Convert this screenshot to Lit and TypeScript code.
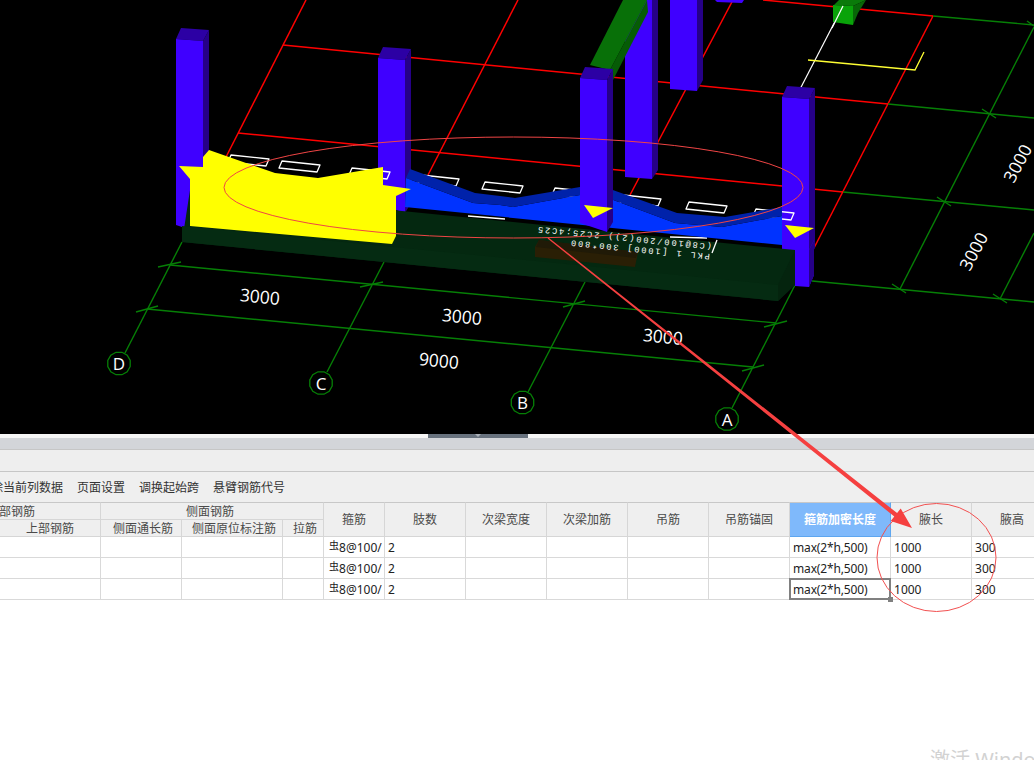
import { LitElement, html, css, svg } from "lit";
import { customElement } from "lit/decorators.js";

const RED = "#ff0000";
const GREEN = "#067f06";

const line = (p: number[], c: string, w = 1.5) =>
  svg`<line x1=${p[0]} y1=${p[1]} x2=${p[2]} y2=${p[3]} stroke=${c} stroke-width=${w} />`;
const poly = (pts: string, fill: string) => svg`<polygon points=${pts} fill=${fill} />`;

const redLines = [
  [763, 0, 933, 16], [283, 45, 888, 104], [238, 133, 843, 192],
  [306, 0, 226, 157], [518, 0, 428, 175], [733, 0, 630, 195], [933, 16, 814, 248],
];
const greenLines = [
  [933, 16, 1034, 25], [888, 104, 1034, 118], [843, 192, 1034, 210], [812, 281, 1034, 302],
  [1034, 27, 900, 289], [1034, 233, 1000, 299],
  [170, 265, 776, 323], [147, 309, 753, 367],
  [182, 242, 125, 353], [384, 262, 327, 372], [585, 282, 528, 392], [795, 285, 732, 408],
  [158, 267, 181, 262], [360, 287, 383, 282], [136, 312, 158, 306], [563, 307, 585, 301],
  [764, 327, 787, 321], [742, 371, 764, 365],
  [982, 109, 996, 118], [937, 197, 951, 206], [892, 284, 906, 293], [993, 294, 1007, 303], [1027, 21, 1034, 26],
];
const stirrups = [
  [228, 155], [279, 161], [349, 168], [418, 175], [482, 182], [552, 188], [620, 195], [686, 202], [753, 209],
];
const axes: [string, number, number][] = [
  ["D", 119, 363.5], ["C", 321, 383], ["B", 522.5, 402.5], ["A", 727, 419],
];
const dims: [string, number, number, number][] = [
  ["3000", 260, 296, 5.5], ["3000", 462, 316, 5.5], ["3000", 663, 336, 5.5], ["9000", 439, 360, 5.5],
  ["3000", 1017, 163, -62], ["3000", 973, 251, -62],
];

function ring(cx: number, cy: number) {
  const pts: string[] = [];
  for (let i = 0; i < 12; i++) {
    const a = (i * Math.PI) / 6 + 0.26;
    pts.push(`${(cx + 11.6 * Math.cos(a)).toFixed(1)},${(cy + 11.6 * Math.sin(a)).toFixed(1)}`);
  }
  return pts.join(" ");
}

function column(x: number, top: number, bottom: number) {
  return svg`
    ${poly(`${x + 27},${top + 2} ${x + 33},${top - 9} ${x + 33},${bottom - 1} ${x + 27},${bottom + 9}`, "#260088")}
    ${poly(`${x},${top} ${x + 5},${top - 11} ${x + 33},${top - 9} ${x + 27},${top + 2}`, "#2c00a4")}
    ${poly(`${x},${top} ${x + 27},${top + 2} ${x + 27},${bottom + 9} ${x},${bottom}`, "#3f00ff")}
  `;
}

@customElement("cad-scene")
class CadScene extends LitElement {
  static styles = css`
    :host { display: block; height: 434px; background: #000; overflow: hidden; }
    svg { display: block; }
    .dim { font: 17.5px "Open Sans", sans-serif; fill: #fff; text-anchor: middle; dominant-baseline: central; }
    .axis { font: 17px "Open Sans", sans-serif; fill: #fff; text-anchor: middle; dominant-baseline: central; }
    .mark { font: 8.6px "Liberation Mono", monospace; fill: #fff; letter-spacing: 1.9px; }
    .stir { fill: none; stroke: #fff; stroke-width: 1.3; stroke-linejoin: round; }
  `;
  render() {
    return html`<svg width="1034" height="434" viewBox="0 0 1034 434">
      ${redLines.map((l) => line(l, RED))}
      ${greenLines.map((l) => line(l, GREEN, 1.4))}
      ${line([843, 6, 798, 93], "#ffffff", 1.2)}
      <polyline points="808,60 915,70 924,52" fill="none" stroke="#ffff33" stroke-width="1.3" />

      <!-- back columns and green members -->
      ${poly("715,0 717,2 742,3 744,0", "#3f00ff")}
      ${poly("652,0 658,0 658,170 652,179", "#260088")}
      ${poly("625,0 652,0 652,179 625,177", "#3f00ff")}
      ${poly("623,0 590,65 610,70 647,0", "#087008")}
      ${poly("647,0 610,70 613,80 648,12", "#065c06")}
      ${poly("697,0 703,0 703,80 697,91", "#260088")}
      ${poly("670,0 697,0 697,91 670,89", "#3f00ff")}
      ${poly("834,5 839,0 866,0 853,6", "#0a7a0a")}
      ${poly("853,6 866,0 858,13 853,25", "#086608")}
      ${poly("833,5 853,6 853,25 833,22", "#09a309")}
      ${line([843, 6, 832, 28], "#ffffff", 1.2)}

      ${column(176, 39, 225)}
      ${column(378, 58, 204)}
      ${column(782, 97, 249)}

      ${stirrups.map(
        ([x, y]) => svg`<polygon class="stir" points="${x},${y + 7} ${x + 3},${y} ${x + 41},${y + 4} ${x + 38},${y + 11}" />`
      )}

      <!-- lower tie marks and the dark beam -->
      ${poly("190,190 795,250 795,285 778,301 182,242", "#042810")}
      ${poly("182,226 778,285 778,301 182,242", "#052b12")}
      ${poly("795,250 795,285 778,301 778,285", "#04240e")}
      ${poly("535,247 539,240 638,252 635,267 535,257", "#2a1f05")}
      ${poly("539,240 638,252 636,258 536,247", "#201a07")}
      ${line([468, 216, 505, 219], "#ffffff", 1.3)}
      ${line([670, 237, 707, 238], "#ffffff", 1.3)}
      ${line([717, 240, 712, 253], "#ffffff", 1.3)}
      <text class="mark" transform="translate(710 254) rotate(185.7)">PKL 1 [1000] 300*800</text>
      <text class="mark" transform="translate(712 244) rotate(185.7)">(C8@100/200(2)) 2C25;4C25</text>

      <!-- blue beam -->
      ${poly("406,178 473,203 500,205 513,207 580,195 608,198 675,223 722,227 782,216 782,245 405,207", "#0033ff")}
      ${poly("410,169 475,193 500,196 515,198 580,187 610,189 677,213 725,217 782,207 782,216 722,227 675,223 608,198 580,195 513,207 500,205 473,203 406,178", "#0022aa")}

      ${column(580, 78, 223)}
      ${poly("795,249 809,250 814,240 814,275 809,287 795,286", "#3f00ff")}
      ${poly("809,250 814,240 814,275 809,287", "#260088")}

      <!-- yellow marked segment -->
      ${poly("179,166 203,167 203,157 209,150 275,173 318,178 383,167 383,185 411,189 396,196 396,236 392,244 190,226 190,179", "#ffff00")}
      ${poly("584,205 613,208 593,218", "#ffff00")}
      ${poly("785,225 814,228 795,238", "#ffff00")}

      ${axes.map(
        ([t, x, y]) => svg`
          <polygon points=${ring(x, y)} fill="#000" stroke=${GREEN} stroke-width="1.3" />
          <text class="axis" x=${x} y=${y}>${t}</text>`
      )}
      ${dims.map(
        ([t, x, y, r]) => svg`<text class="dim" transform="translate(${x} ${y}) rotate(${r})">${t}</text>`
      )}
    </svg>`;
  }
}

@customElement("rebar-table")
class RebarTable extends LitElement {
  static styles = css`
    :host { display: block; overflow: hidden; height: 104px; }
    table {
      border-spacing: 0; border-collapse: separate; table-layout: fixed;
      width: 1131px; margin-left: -78px;
      font: 12px "Noto Sans", "Noto Sans CJK SC", sans-serif; color: #222;
    }
    th {
      height: 16px; padding: 0; font-weight: 400; color: #4a4a4a; line-height: 16px;
      background: #efefef; border-right: 1px solid #d6d6d6; border-bottom: 1px solid #d6d6d6;
      border-top: 0; white-space: nowrap; overflow: hidden;
    }
    thead tr:first-child th { border-top: 1px solid #c8c8c8; height: 16px; }
    th.low { height: 14px; padding-top: 2px; line-height: 14px; }
    thead tr:first-child th.low { height: 14px; }
    th.right { padding-left: 4px; }
    th.left { padding-right: 4px; }
    td {
      height: 18px; padding: 2px 0 0 3px; line-height: 18px; background: #fff;
      border-right: 1px solid #d9d9d9; border-bottom: 1px solid #d9d9d9;
      white-space: nowrap; overflow: hidden; box-sizing: content-box;
    }
    th.active { background: #7fb9fb; color: #fff; font-weight: 700; border-right-color: #5ea6ef; border-bottom-color: #5ea6ef; }
    td.bar { padding-left: 5px; }
    td.formula { letter-spacing: -0.15px; }
    .grade { font-size: 10px; line-height: 1; position: relative; top: -3px; }
    td.sel { position: relative; overflow: visible; }
    td.sel::after { content: ""; position: absolute; inset: -1px; border: 2px solid #808080; }
    td.sel::before {
      content: ""; position: absolute; right: -3px; bottom: -3px; width: 5px; height: 5px;
      background: #808080; z-index: 1;
    }
  `;
  render() {
    const widths = [78, 101, 81, 101, 41, 61, 81, 81, 81, 81, 81, 101, 81, 81];
    const rows = [0, 1, 2];
    return html`<table>
      <colgroup>${widths.map((w) => html`<col style="width:${w}px" />`)}</colgroup>
      <thead>
        <tr>
          <th colspan="2" class="low">下部钢筋</th>
          <th colspan="3" class="low left">侧面钢筋</th>
          <th rowspan="2">箍筋</th>
          <th rowspan="2">肢数</th>
          <th rowspan="2">次梁宽度</th>
          <th rowspan="2">次梁加筋</th>
          <th rowspan="2">吊筋</th>
          <th rowspan="2">吊筋锚固</th>
          <th rowspan="2" class="active">箍筋加密长度</th>
          <th rowspan="2">腋长</th>
          <th rowspan="2">腋高</th>
        </tr>
        <tr>
          <th class="low"></th>
          <th class="low">上部钢筋</th>
          <th class="low right">侧面通长筋</th>
          <th class="low right">侧面原位标注筋</th>
          <th class="low right">拉筋</th>
        </tr>
      </thead>
      <tbody>
        ${rows.map(
          (i) => html`<tr>
            <td></td><td></td><td></td><td></td><td></td>
            <td class="bar"><span class="grade">虫</span>8@100/</td>
            <td>2</td><td></td><td></td><td></td><td></td>
            <td class="formula ${i === 2 ? "sel" : ""}">max(2*h,500)</td>
            <td>1000</td><td>300</td>
          </tr>`
        )}
      </tbody>
    </table>`;
  }
}

@customElement("app-root")
class AppRoot extends LitElement {
  static styles = css`
    :host {
      display: block; position: relative; width: 1034px; height: 760px; overflow: hidden;
      background: #fff; font-family: "Noto Sans", "Noto Sans CJK SC", sans-serif;
    }
    .split { height: 4px; background: #f6f6f6; display: flex; justify-content: center; padding-right: 78px; box-sizing: border-box; }
    .handle { width: 100px; height: 4px; background: #68727e; display: flex; justify-content: center; }
    .handle i { width: 0; height: 0; border: 3px solid transparent; border-top-color: #aab0b8; border-bottom: 0; }
    .tabs { height: 11px; background: #d3d5d9; border-bottom: 1px solid #c6c6c6; }
    .sub { height: 21px; background: #eeeeee; border-bottom: 1px solid #c6c6c6; }
    .tools {
      height: 30px; background: #efefef; display: flex; align-items: center; gap: 14px;
      overflow: hidden; font-size: 12px; color: #333; white-space: nowrap;
    }
    .tools span:first-child { margin-left: -21px; }
    .over { position: absolute; inset: 0; pointer-events: none; }
    .wm { position: absolute; left: 930px; top: 744px; font-size: 20px; color: #d2d2d2; white-space: nowrap; }
  `;
  render() {
    return html`
      <cad-scene></cad-scene>
      <div class="split"><div class="handle"><i></i></div></div>
      <div class="tabs"></div>
      <div class="sub"></div>
      <div class="tools">
        <span>删除当前列数据</span><span>页面设置</span><span>调换起始跨</span><span>悬臂钢筋代号</span>
      </div>
      <rebar-table></rebar-table>
      <div class="wm">激活 Windows</div>
      <svg class="over" width="1034" height="760" viewBox="0 0 1034 760">
        <ellipse cx="513.5" cy="187.5" rx="289.5" ry="50.5" fill="none" stroke="#f04545" stroke-width="1" />
        <ellipse cx="936.5" cy="557.5" rx="59.5" ry="54" fill="none" stroke="#f25050" stroke-width="1" />
        <polygon points="548.4,237.5 897.1,513.1 900.7,508.6 912,528 890.7,521 894.3,516.5 547.6,238.5" fill="#f54040" />
      </svg>
    `;
  }
}
